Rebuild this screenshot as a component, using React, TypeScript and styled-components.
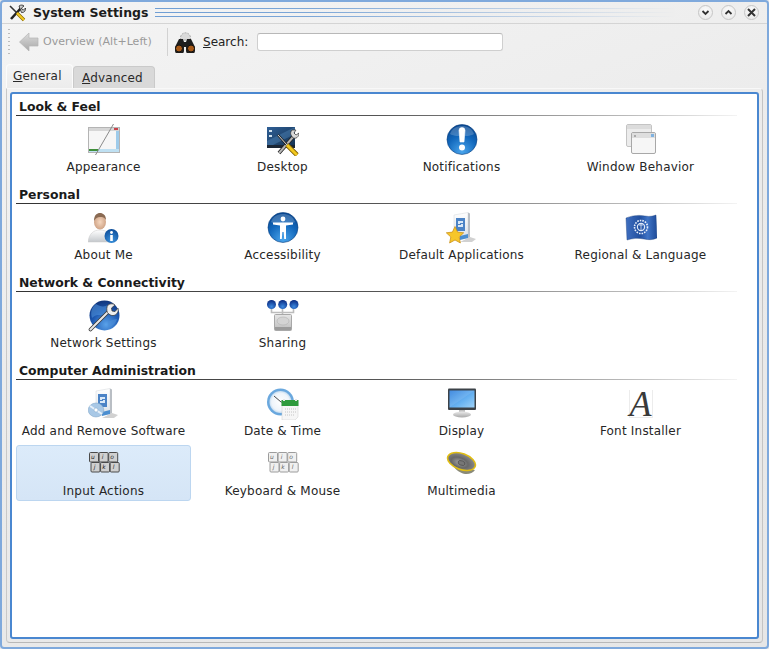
import React from "react";
import styled, { createGlobalStyle } from "styled-components";

const Global = createGlobalStyle`
  html, body { margin: 0; padding: 0; background: #e8e8e8; }
  body { font-family: "DejaVu Sans", sans-serif; font-size: 12px; color: #222; }
`;

const Frame = styled.div`
  width: 769px; height: 649px; box-sizing: border-box;
  display: flex; flex-direction: column;
  border: 2px solid #7fa9dc; border-radius: 4px;
  background: linear-gradient(160deg, #f4f4f4 0%, #ececec 40%, #e6e6e6 100%);
  overflow: hidden;
`;
const TitleBar = styled.div`
  height: 21px; flex: none; display: flex; align-items: center;
  padding: 0 8px 0 6px; gap: 7px;
  border-bottom: 1px solid #d4d4d4;
`;
const AppIcon = styled.svg`width: 18px; height: 18px; flex: none;`;
const TitleText = styled.div`
  font-weight: bold; font-size: 12.5px; color: #1c1c1c; white-space: nowrap;
`;
const TitleRules = styled.div`
  flex: 1; height: 9px; margin: 0 16px 0 0;
  background:
    linear-gradient(90deg, rgba(236,236,236,0) 0%, rgba(240,240,240,0.1) 30%, #eeeeee 100%),
    repeating-linear-gradient(180deg, #6f9ed4 0, #6f9ed4 1px, transparent 1px, transparent 4px);
`;
const WinButtons = styled.div`display: flex; gap: 8px;`;
const WinButton = styled.div`
  width: 15px; height: 15px; box-sizing: border-box; border-radius: 50%; display: flex; align-items: center; justify-content: center;
  background: radial-gradient(circle at 50% 35%, #fbfbfb, #e6e6e6);
  border: 1px solid #c6c6c6; color: #333;
`;
const Toolbar = styled.div`
  height: 37px; box-sizing: border-box; flex: none; display: flex; align-items: center; padding: 0 0 2px 5px;
`;
const Handle = styled.div`
  width: 2px; height: 26px; margin: 0 8px 0 1px;
  background: repeating-linear-gradient(180deg, #bcbcbc 0, #bcbcbc 1px, transparent 1px, transparent 4px);
`;
const BackIcon = styled.svg`width: 22px; height: 20px; flex: none;`;
const BackLabel = styled.span`color: #9a9a9a; margin-left: 3px; width: 108px; white-space: nowrap; font-size: 11px;`;
const Sep = styled.div`width: 1px; height: 28px; background: #d2d2d2; margin: 0 5px 0 16px;`;
const BinoIcon = styled.svg`width: 24px; height: 22px; flex: none;`;
const SearchLabel = styled.label`margin: 0 10px 0 6px; width: 44px; white-space: nowrap;`;
const SearchInput = styled.input`
  width: 246px; height: 18px; box-sizing: border-box; background: #fff; border: 1px solid #cfcfcf; border-top-color: #b8b8b8;
  border-radius: 3px; outline: none;
`;
const Tabs = styled.div`
  flex: none; height: 24px; margin: 3px 0 0 4px; display: flex; align-items: flex-end;
`;
const Tab = styled.div<{ $active?: boolean }>`
  box-sizing: border-box; white-space: nowrap;
  display: flex; align-items: center; padding-left: ${(p) => (p.$active ? "6px" : "8px")};
  padding-bottom: ${(p) => (p.$active ? "1px" : "0")};
  letter-spacing: 0.2px;
  width: ${(p) => (p.$active ? "67px" : "82px")};
  height: ${(p) => (p.$active ? "24px" : "22px")};
  background: ${(p) => (p.$active ? "linear-gradient(180deg,#f4f4f4,#ececec)" : "#d9d9d9")};
  border: 1px solid ${(p) => (p.$active ? "#fbfbfb" : "#cacaca")};
  border-bottom: none; border-radius: 4px 4px 0 0;
  color: #2a2a2a;
`;
const TabBody = styled.div`
  flex: 1; margin: 0 4px 4px 4px; padding: 3px 3px 3px 3px; display: flex;
  border: 1px solid #f8f8f8; border-bottom-color: #b8b8b8; border-right-color: #c4c4c4; border-left-color: #c8c8c8;
  border-radius: 0 4px 4px 4px; min-height: 0;
`;
const Panel = styled.div`
  flex: 1; background: #fff; border: 2px solid #4a87d0; border-radius: 3px; padding: 2px 20px 0 4px; overflow: hidden;
`;
const Section = styled.section`
  margin-bottom: 7px;
`;
const Heading = styled.h2`
  margin: 0 0 5px; height: 20px; box-sizing: border-box; padding: 2px 0 0 3px; line-height: 18px;
  font-size: 12.4px; font-weight: bold; color: #1a1a1a;
  border-bottom: 1px solid; border-image: linear-gradient(90deg, #333 0%, #555 50%, #bbb 85%, #f4f4f4 100%) 1;
`;
const Grid = styled.div`
  display: grid; grid-template-columns: repeat(4, 175px); column-gap: 4px; row-gap: 4px;
`;
const Cell = styled.div<{ $selected?: boolean }>`
  height: 56px; box-sizing: border-box; display: flex; flex-direction: column; align-items: center;
  padding-top: ${(p) => (p.$selected ? "2px" : "3px")};
  border-radius: 3px;
  border: ${(p) => (p.$selected ? "1px solid #bcd6f0" : "none")};
  background: ${(p) => (p.$selected ? "linear-gradient(180deg,#dcebfa,#d5e5f6)" : "transparent")};
`;
const IconBox = styled.div`
  width: 32px; height: 32px; flex: none; display: flex; align-items: center; justify-content: center;
`;
const Label = styled.div`
  margin-top: 4px; line-height: 14px; white-space: nowrap; color: #262626; font-size: 12px; letter-spacing: 0.2px;
`;
const FontGlyph = styled.div`
  width: 24px; height: 28px; box-sizing: border-box; border-left: 1px solid #ececec; border-right: 1px solid #ececec; border-bottom: 1px solid #ececec;
  font-family: "Liberation Serif", serif; font-style: italic; font-size: 36px; line-height: 29px; text-align: center; color: #3a3a3a;
`;
const Sv = styled.svg`width: 32px; height: 32px; display: block;`;

function Orb({ id, children }: { id: string; children: React.ReactNode }) {
  return (
    <Sv viewBox="0 0 32 32">
      <defs>
        <radialGradient id={id} cx="0.5" cy="0.9" r="0.85">
          <stop offset="0" stopColor="#4aa5ec" />
          <stop offset="0.6" stopColor="#1268bc" />
          <stop offset="1" stopColor="#0a4a94" />
        </radialGradient>
      </defs>
      <circle cx="16" cy="15.500" r="15" fill={`url(#${id})`} stroke="#0b3f80" strokeWidth="0.6" />
      <path d="M4 10C6 4 11 2 16 2s10 2 12 8c-4 3-20 3-24 0z" fill="#fff" opacity="0.2" />
      {children}
    </Sv>
  );
}

const Appearance = () => (
  <Sv viewBox="0 0 32 32">
    <rect x="0.5" y="3.500" width="31" height="25" fill="#f6f6f6" stroke="#b4b4b4" />
    <rect x="1" y="4" width="30" height="3" fill="#d6d6d6" />
    <rect x="26" y="4" width="4" height="2" fill="#c8424a" />
    <rect x="28" y="7" width="3" height="21" fill="#9ecbea" />
    <rect x="1" y="25" width="30" height="3" fill="#bfe0f2" />
    <rect x="1" y="25" width="9" height="2" fill="#3f8f3b" />
    <path d="M25.500 0L7.500 31" stroke="#8a8a8a" strokeWidth="1" />
  </Sv>
);
const Desktop = () => (
  <Sv viewBox="0 0 32 32">
    <defs>
      <linearGradient id="dk" x1="0" y1="0" x2="1" y2="1">
        <stop offset="0" stopColor="#2f5f96" />
        <stop offset="1" stopColor="#12304f" />
      </linearGradient>
    </defs>
    <rect x="0" y="3" width="28" height="21" fill="url(#dk)" />
    <path d="M0 24L28 10V3L0 17z" fill="#4f86b8" opacity="0.45" />
    <rect x="0" y="21" width="28" height="3" fill="#1a2533" />
    <rect x="2" y="6" width="3" height="2" fill="#cfe0ee" />
    <rect x="2" y="11" width="3" height="2" fill="#cfe0ee" />
    <path d="M12 29L27 12" stroke="#222" strokeWidth="3.600" />
    <path d="M12 29L27 12" stroke="#b6b6b6" strokeWidth="2" />
    <path d="M25 6l4 0-2 3 2 2 3-2c0 4-3 6-6 5l-2-3c-1-2 0-4 1-5z" fill="#d8d8d8" stroke="#333" strokeWidth="0.7" />
    <path d="M11 11L20 21" stroke="#222" strokeWidth="2.400" />
    <path d="M11 11L20 21" stroke="#ddd" strokeWidth="1" />
    <path d="M20 21L30 31" stroke="#7a5a00" strokeWidth="4.600" />
    <path d="M20 21L30 31" stroke="#f2c81f" strokeWidth="3" />
  </Sv>
);
const Notifications = () => (
  <Orb id="orbN">
    <path d="M13 6.500a3 3 0 0 1 6 0l-1 11.500h-4z" fill="#fff" stroke="#fff" strokeLinejoin="round" strokeWidth="0.6" />
    <circle cx="16" cy="23.500" r="3" fill="#fff" />
  </Orb>
);
const WindowBehavior = () => (
  <Sv viewBox="0 0 32 32">
    <rect x="1.500" y="0.5" width="25" height="22" rx="1.500" fill="#ececec" stroke="#c4c4c4" />
    <rect x="2" y="1" width="24" height="4" fill="#dcdcdc" />
    <rect x="6.500" y="8.500" width="24" height="21" rx="1.500" fill="#f6f6f6" stroke="#a8a8a8" />
    <rect x="7" y="9" width="23" height="5" fill="#dedede" />
    <rect x="9" y="11" width="2" height="2" fill="#aaa" />
    <rect x="26" y="10" width="3" height="3" fill="#80b2e0" />
  </Sv>
);
const AboutMe = () => (
  <Sv viewBox="0 0 32 32">
    <defs>
      <radialGradient id="skin" cx="0.5" cy="0.5" r="0.6">
        <stop offset="0" stopColor="#f6d8c0" />
        <stop offset="1" stopColor="#c89a7c" />
      </radialGradient>
      <linearGradient id="shirt" x1="0" y1="0" x2="0" y2="1">
        <stop offset="0" stopColor="#ffffff" />
        <stop offset="1" stopColor="#c4c8cc" />
      </linearGradient>
      <radialGradient id="infoB" cx="0.5" cy="0.8" r="0.8">
        <stop offset="0" stopColor="#3b92dd" />
        <stop offset="1" stopColor="#0b4c98" />
      </radialGradient>
    </defs>
    <path d="M0 30c1-8 5-12 12-12s11 4 12 12z" fill="url(#shirt)" stroke="#c8c8c8" strokeWidth="0.5" />
    <ellipse cx="12" cy="10" rx="6" ry="7.500" fill="url(#skin)" />
    <path d="M6 9c0-6 3-8 6-8s6 2 6 7c-2-3-3-3-6-3s-4 1-6 4z" fill="#8a6a52" />
    <circle cx="23.500" cy="24" r="7" fill="url(#infoB)" />
    <circle cx="23.500" cy="20.500" r="1.400" fill="#fff" />
    <rect x="22.200" y="23" width="2.600" height="6" fill="#fff" />
  </Sv>
);
const Accessibility = () => (
  <Orb id="orbA">
    <circle cx="16" cy="7" r="2.400" fill="#fff" />
    <path d="M6 10.500h20v2l-7 1v7l0 6.500h-1.800l-.6-7h-1.200l-.6 7H13v-6.500v-7l-7-1z" fill="#fff" />
  </Orb>
);
const SoftBox = ({ id, art }: { id: string; art: React.ReactNode }) => (
  <Sv viewBox="0 0 32 32">
    <defs>
      <linearGradient id={id} x1="0" y1="0" x2="0" y2="1">
        <stop offset="0" stopColor="#ffffff" />
        <stop offset="1" stopColor="#d8dfe6" />
      </linearGradient>
    </defs>
    <path d="M24 25l6 2-4 3H14z" fill="#999" opacity="0.45" />
    <path d="M8 3l14-2.500V26L8 28z" fill={`url(#${id})`} stroke="#d2d6da" strokeWidth="0.5" />
    <path d="M22 .5l2 1V25l-2 1z" fill="#b9bec4" />
    <rect x="10" y="6" width="9" height="13" fill="#4b83c6" />
    <path d="M12 9h5v2h-3v1h3v3h-5v-2h3v-1h-3z" fill="#d9e8f7" />
    <path d="M14 24l8-2v4l-8 2z" fill="#4b8ed0" />
    {art}
  </Sv>
);
const DefaultApps = () => (
  <SoftBox
    id="boxA"
    art={
      <path
        d="M9 14.500l2.600 5.600 6.100.7-4.500 4.200 1.200 6-5.400-3-5.400 3 1.200-6-4.500-4.200 6.100-.7z"
        fill="#f6c62a"
        stroke="#c68a12"
        strokeWidth="0.7"
      />
    }
  />
);
const AddRemove = () => (
  <SoftBox
    id="boxB"
    art={
      <g>
        <ellipse cx="8" cy="22" rx="7.800" ry="7" fill="#a8c8e6" stroke="#7ba0c4" strokeWidth="0.5" />
        <path d="M8 22L2 18M8 22l6 4" stroke="#e6f0fa" strokeWidth="2" />
        <circle cx="8" cy="22" r="2" fill="#fff" stroke="#7ba0c4" strokeWidth="0.5" />
      </g>
    }
  />
);
const Regional = () => (
  <Sv viewBox="0 0 32 32">
    <defs>
      <linearGradient id="flag" x1="0" y1="0" x2="1" y2="0">
        <stop offset="0" stopColor="#3f6fc0" />
        <stop offset="0.45" stopColor="#214f9f" />
        <stop offset="0.7" stopColor="#3f74c6" />
        <stop offset="1" stopColor="#1e4b99" />
      </linearGradient>
    </defs>
    <path d="M1 6c8-3 14-3 19-2s8 0 11-1l1 23c-4 2-8 2-13 1s-11-1-17 1z" fill="url(#flag)" stroke="#153a7a" strokeWidth="0.4" />
    <circle cx="16" cy="15" r="6.500" fill="none" stroke="#e6eefa" strokeWidth="1.600" strokeDasharray="1.600 1" />
    <circle cx="16" cy="15" r="3.600" fill="none" stroke="#dfe9f8" strokeWidth="1.200" />
    <path d="M14 13h4M16 12v6" stroke="#dfe9f8" strokeWidth="0.8" />
  </Sv>
);
const Network = () => (
  <Sv viewBox="0 0 32 32">
    <defs>
      <radialGradient id="glob" cx="0.55" cy="0.8" r="0.85">
        <stop offset="0" stopColor="#5aa2ea" />
        <stop offset="0.55" stopColor="#1c57b0" />
        <stop offset="1" stopColor="#0e2f72" />
      </radialGradient>
    </defs>
    <circle cx="16.500" cy="15.500" r="15" fill="url(#glob)" />
    <path d="M8 4c4 3 9 3 12 1 2 5-1 9-6 10-3 0-6-1-10 3C2 12 4 7 8 4zM20 22c3-2 7-3 9-3-1 4-4 7-8 8z" fill="#4d8fd8" opacity="0.6" />
    <path d="M2.500 29.500L21 11" stroke="#333" strokeWidth="3.600" strokeLinecap="round" />
    <path d="M2.500 29.500L21 11" stroke="#e6e6e6" strokeWidth="2.200" strokeLinecap="round" />
    <path d="M20 5c3-2 6-1 7 0l-3.500 3 .5 3 3 .6 3-3.400c1 3-1 7-5 7.400-2 0-4-1-5.500-3-1-2-1-6 .5-7.600z" fill="#eee" stroke="#333" strokeWidth="0.7" />
  </Sv>
);
const Sharing = () => (
  <Sv viewBox="0 0 32 32">
    <defs>
      <radialGradient id="ball" cx="0.5" cy="0.75" r="0.7">
        <stop offset="0" stopColor="#3d8ae0" />
        <stop offset="1" stopColor="#0c2f86" />
      </radialGradient>
      <linearGradient id="hdd" x1="0" y1="0" x2="0" y2="1">
        <stop offset="0" stopColor="#e6e6e6" />
        <stop offset="1" stopColor="#bdbdbd" />
      </linearGradient>
    </defs>
    <path d="M4.500 7v5.500h22V7M15.500 7v8" stroke="#bcbcbc" strokeWidth="1.600" fill="none" />
    <rect x="7.500" y="14.500" width="17" height="16" rx="1" fill="url(#hdd)" stroke="#a8a8a8" />
    <ellipse cx="16" cy="21" rx="6" ry="4" fill="#d4d4d4" stroke="#aaa" strokeWidth="0.5" />
    <rect x="8" y="27" width="16" height="3" fill="#9b9b9b" />
    <circle cx="4.500" cy="4.500" r="4.500" fill="url(#ball)" />
    <circle cx="15.700" cy="4.500" r="4.500" fill="url(#ball)" />
    <circle cx="27" cy="4.500" r="4.500" fill="url(#ball)" />
  </Sv>
);
const DateTime = () => (
  <Sv viewBox="0 0 32 32">
    <defs>
      <radialGradient id="clk" cx="0.5" cy="0.5" r="0.5">
        <stop offset="0" stopColor="#ffffff" />
        <stop offset="0.8" stopColor="#eef4fa" />
        <stop offset="1" stopColor="#c5dcf0" />
      </radialGradient>
    </defs>
    <circle cx="13.500" cy="14" r="13.500" fill="#6aa8de" />
    <circle cx="13.500" cy="14" r="11" fill="url(#clk)" />
    <path d="M14 14L7 8M14 14l8 2" stroke="#333" strokeWidth="0.9" />
    <path d="M15 14h16v15l-3 3H15z" fill="#f6f6f6" stroke="#cfcfcf" strokeWidth="0.5" />
    <rect x="14.500" y="12" width="17" height="6" fill="#2e9a3c" />
    <rect x="16" y="11" width="2" height="2" fill="#e6e6e6" />
    <rect x="28" y="11" width="2" height="2" fill="#e6e6e6" />
    <path d="M18 21h11M18 24h11M18 27h9" stroke="#c4c4c4" strokeWidth="1" strokeDasharray="1 1" />
  </Sv>
);
const Display = () => (
  <Sv viewBox="0 0 32 32">
    <defs>
      <linearGradient id="scr" x1="0" y1="0" x2="1" y2="1">
        <stop offset="0" stopColor="#2f7fdc" />
        <stop offset="0.6" stopColor="#6ab4f2" />
        <stop offset="1" stopColor="#9fd2f8" />
      </linearGradient>
      <linearGradient id="stand" x1="0" y1="0" x2="0" y2="1">
        <stop offset="0" stopColor="#ececec" />
        <stop offset="1" stopColor="#a8a8a8" />
      </linearGradient>
    </defs>
    <rect x="2" y="0.5" width="28" height="21.500" rx="1" fill="#3c4248" />
    <rect x="3.500" y="2.500" width="25" height="17" fill="url(#scr)" />
    <path d="M3.500 19.500L28.500 2.500H3.500z" fill="#fff" opacity="0.1" />
    <rect x="13" y="22" width="6" height="3" fill="#c0c0c0" />
    <ellipse cx="16" cy="26.500" rx="9" ry="3" fill="url(#stand)" />
  </Sv>
);
const Keys = ({ light }: { light?: boolean }) => {
  const edge = light ? "#9c9c9c" : "#4a4a4a";
  const top = light ? "#f0f0f0" : "#d0d0d0";
  const rows: [number, number, string[]][] = [
    [1, 4, ["u", "i", "o"]],
    [2.5, 14, ["j", "k", "l"]],
  ];
  return (
    <Sv viewBox="0 0 32 32">
      {rows.map(([x, y, ks]) =>
        ks.map((k, i) => (
          <g key={k}>
            <rect x={x + i * 9.6 + 0.5} y={y + 0.5} width="9" height="9.500" rx="1" fill={top} stroke={edge} />
            <text x={x + i * 9.6 + 4} y={y + 7} fontFamily="'DejaVu Sans', sans-serif" fontStyle="italic" fontSize="6" fill={light ? "#666" : "#222"} textAnchor="middle">
              {k}
            </text>
          </g>
        ))
      )}
    </Sv>
  );
};
const Multimedia = () => (
  <Sv viewBox="0 0 32 32">
    <defs>
      <radialGradient id="cone" cx="0.45" cy="0.6" r="0.6">
        <stop offset="0" stopColor="#a4a4a4" />
        <stop offset="0.5" stopColor="#686868" />
        <stop offset="1" stopColor="#8c8c8c" />
      </radialGradient>
    </defs>
    <path d="M6 16c2 4 7 9 13 10 4 .5 8-1 10-4z" fill="#8a8a78" />
    <ellipse cx="15.500" cy="13.500" rx="14.500" ry="8" transform="rotate(20 15.500 13.500)" fill="url(#cone)" stroke="#e0bd14" strokeWidth="1.600" />
    <ellipse cx="15.500" cy="15" rx="3.600" ry="2.200" transform="rotate(20 15.500 15)" fill="#777" stroke="#444" strokeWidth="0.6" />
  </Sv>
);
const FontInstaller = () => <FontGlyph>A</FontGlyph>;

type Item = { label: string; icon: React.ReactNode; selected?: boolean };
const sections: { title: string; items: Item[] }[] = [
  {
    title: "Look & Feel",
    items: [
      { label: "Appearance", icon: <Appearance /> },
      { label: "Desktop", icon: <Desktop /> },
      { label: "Notifications", icon: <Notifications /> },
      { label: "Window Behavior", icon: <WindowBehavior /> },
    ],
  },
  {
    title: "Personal",
    items: [
      { label: "About Me", icon: <AboutMe /> },
      { label: "Accessibility", icon: <Accessibility /> },
      { label: "Default Applications", icon: <DefaultApps /> },
      { label: "Regional & Language", icon: <Regional /> },
    ],
  },
  {
    title: "Network & Connectivity",
    items: [
      { label: "Network Settings", icon: <Network /> },
      { label: "Sharing", icon: <Sharing /> },
    ],
  },
  {
    title: "Computer Administration",
    items: [
      { label: "Add and Remove Software", icon: <AddRemove /> },
      { label: "Date & Time", icon: <DateTime /> },
      { label: "Display", icon: <Display /> },
      { label: "Font Installer", icon: <FontInstaller /> },
      { label: "Input Actions", icon: <Keys />, selected: true },
      { label: "Keyboard & Mouse", icon: <Keys light /> },
      { label: "Multimedia", icon: <Multimedia /> },
    ],
  },
];

export default function App() {
  return (
    <>
      <Global />
      <Frame>
        <TitleBar>
          <AppIcon viewBox="0 0 18 18">
            <path d="M3 15L13 4" stroke="#222" strokeWidth="2.600" />
            <path d="M11 2c2-1.500 4-1 5 0l-2.500 2 .5 1.500 1.500.5 2-2c.5 2-1 5-4 4.500z" fill="#ccc" stroke="#222" strokeWidth="0.8" />
            <path d="M2 2l7 7" stroke="#333" strokeWidth="1.600" />
            <path d="M9 9l7 7" stroke="#8a6a00" strokeWidth="3.400" />
            <path d="M9 9l7 7" stroke="#f2c81f" strokeWidth="2" />
          </AppIcon>
          <TitleText>System Settings</TitleText>
          <TitleRules />
          <WinButtons>
            <WinButton>
              <svg width="9" height="9" viewBox="0 0 9 9"><path d="M1.500 3l3 3 3-3" fill="none" stroke="#333" strokeWidth="1.800" /></svg>
            </WinButton>
            <WinButton>
              <svg width="9" height="9" viewBox="0 0 9 9"><path d="M1.500 6l3-3 3 3" fill="none" stroke="#333" strokeWidth="1.800" /></svg>
            </WinButton>
            <WinButton>
              <svg width="9" height="9" viewBox="0 0 9 9"><path d="M1 1l7 7M8 1l-7 7" fill="none" stroke="#333" strokeWidth="2" /></svg>
            </WinButton>
          </WinButtons>
        </TitleBar>
        <Toolbar>
          <Handle />
          <BackIcon viewBox="0 0 22 20">
            <defs>
              <linearGradient id="bk" x1="0" y1="0" x2="0" y2="1">
                <stop offset="0" stopColor="#dcdcdc" />
                <stop offset="1" stopColor="#a8a8a8" />
              </linearGradient>
            </defs>
            <path d="M1.500 10L11 1v5h9v8h-9v5z" fill="url(#bk)" stroke="#b4b4b4" strokeWidth="0.7" strokeLinejoin="round" />
          </BackIcon>
          <BackLabel>Overview (Alt+Left)</BackLabel>
          <Sep />
          <BinoIcon viewBox="0 0 24 22">
            <path d="M8 9a5 5 0 1 1 9 0z" fill="#dadada" stroke="#a8a8a8" strokeDasharray="2 1" />
            <path d="M6 8h4l1 3h2l1-3h4l4 8v3a3 3 0 0 1-9 1v-4h-2v4a3 3 0 0 1-9-1v-3z" fill="#1e1e1e" />
            <circle cx="6" cy="17.500" r="3.500" fill="#a85a18" stroke="#111" />
            <circle cx="18" cy="17.500" r="3.500" fill="#a85a18" stroke="#111" />
          </BinoIcon>
          <SearchLabel>
            <u>S</u>earch:
          </SearchLabel>
          <SearchInput />
        </Toolbar>
        <Tabs>
          <Tab $active>
            <span><u>G</u>eneral</span>
          </Tab>
          <Tab>
            <span><u>A</u>dvanced</span>
          </Tab>
        </Tabs>
        <TabBody>
          <Panel>
            {sections.map((s) => (
              <Section key={s.title}>
                <Heading>{s.title}</Heading>
                <Grid>
                  {s.items.map((it) => (
                    <Cell key={it.label} $selected={it.selected}>
                      <IconBox>{it.icon}</IconBox>
                      <Label>{it.label}</Label>
                    </Cell>
                  ))}
                </Grid>
              </Section>
            ))}
          </Panel>
        </TabBody>
      </Frame>
    </>
  );
}
